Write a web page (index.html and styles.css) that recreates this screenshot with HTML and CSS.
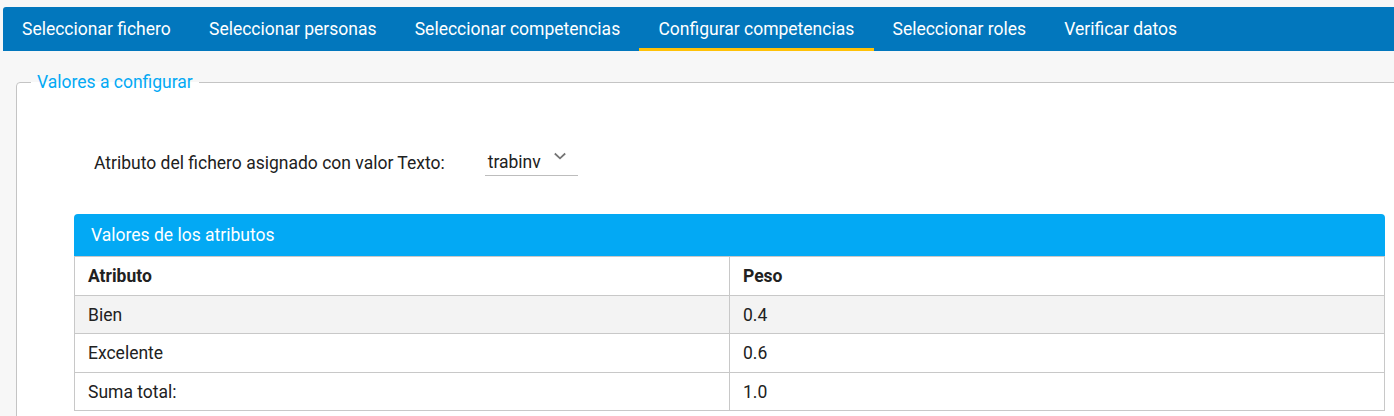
FILE: index.html
```html
<!DOCTYPE html>
<html lang="es">
<head>
<meta charset="utf-8">
<title>Configurar competencias</title>
<link rel="stylesheet" href="styles.css">
</head>
<body>
<nav class="tabs">
  <a class="tab">Seleccionar fichero</a>
  <a class="tab">Seleccionar personas</a>
  <a class="tab">Seleccionar competencias</a>
  <a class="tab active">Configurar competencias</a>
  <a class="tab">Seleccionar roles</a>
  <a class="tab">Verificar datos</a>
</nav>
<fieldset class="group">
  <legend class="legend">Valores a configurar</legend>
  <div class="group-body">
    <div class="field-row">
      <label class="field-label">Atributo del fichero asignado con valor Texto:</label>
      <div class="select">
        <span class="select-value">trabinv</span>
        <svg class="chev" width="12" height="8" viewBox="0 0 12 8"><path d="M0.8 1.5 L6 6.3 L11.2 1.5" fill="none" stroke="#757575" stroke-width="1.8"/></svg>
      </div>
    </div>
    <div class="panel">
      <div class="panel-head">Valores de los atributos</div>
      <table class="grid">
        <thead>
          <tr><th>Atributo</th><th>Peso</th></tr>
        </thead>
        <tbody>
          <tr class="odd"><td>Bien</td><td>0.4</td></tr>
          <tr class="tall"><td>Excelente</td><td>0.6</td></tr>
          <tr><td>Suma total:</td><td>1.0</td></tr>
        </tbody>
      </table>
    </div>
  </div>
</fieldset>
</body>
</html>
```
FILE: styles.css
```css
html, body {
  margin: 0;
  padding: 0;
  overflow: hidden;
}
body {
  background: #f7f7f7;
  font-family: Roboto, "Liberation Sans", sans-serif;
  font-size: 17.5px;
  color: #212121;
}
.tabs {
  display: flex;
  margin: 7px 0 0 3px;
  height: 44px;
  background: #0277bd;
  border-top-left-radius: 3px;
}
.tab {
  display: block;
  padding: 0 19.25px 0 19px;
  line-height: 44px;
  height: 44px;
  box-sizing: border-box;
  color: #ffffff;
  font-size: 17.5px;
  white-space: nowrap;
}
.tab.active {
  border-bottom: 3px solid #ffc107;
}
.group {
  margin: 21px 0 0 16px;
  width: 1420px;
  box-sizing: border-box;
  border: 1px solid #c4c4c4;
  border-top-left-radius: 4px;
  background: #ffffff;
  padding: 0;
  min-width: 0;
}
.legend {
  margin-left: 14px;
  padding: 0 6px;
  color: #03a9f4;
  font-size: 17.5px;
  line-height: 20px;
}
.group-body {
  padding: 0 0 40px 57px;
}
.field-row {
  display: flex;
  align-items: flex-end;
  gap: 40px;
  margin: 51px 0 0 20px;
  height: 34px;
}
.field-label {
  font-size: 17.5px;
  line-height: 20px;
  padding-bottom: 4px;
  color: #212121;
}
.select {
  position: relative;
  width: 93px;
  height: 33px;
  margin-bottom: 1px;
  box-sizing: border-box;
  border-bottom: 1px solid #bdbdbd;
  display: flex;
  align-items: flex-end;
  overflow: hidden;
}
.select-value {
  display: block;
  width: 53px;
  overflow: hidden;
  white-space: nowrap;
  padding: 0 0 3px 3px;
  font-size: 17.5px;
  line-height: 20px;
  color: #212121;
}
.chev {
  position: absolute;
  left: 69px;
  top: 9px;
}
.panel {
  margin-top: 37px;
  width: 1311px;
}
.panel-head {
  height: 42px;
  line-height: 42px;
  background: #03a9f4;
  color: #ffffff;
  font-size: 17.5px;
  padding-left: 17px;
  border-radius: 4px 4px 0 0;
}
.grid {
  width: 100%;
  border-collapse: collapse;
  table-layout: fixed;
}
.grid th, .grid td {
  border: 1px solid #c8c8c8;
  height: 38px;
  padding: 0 13px;
  text-align: left;
  box-sizing: border-box;
  font-size: 17.5px;
}
.grid th {
  font-weight: 700;
  height: 39px;
}
.grid tr.tall td {
  height: 39px;
}
.grid tr.odd td {
  background: #f3f3f3;
}
```
